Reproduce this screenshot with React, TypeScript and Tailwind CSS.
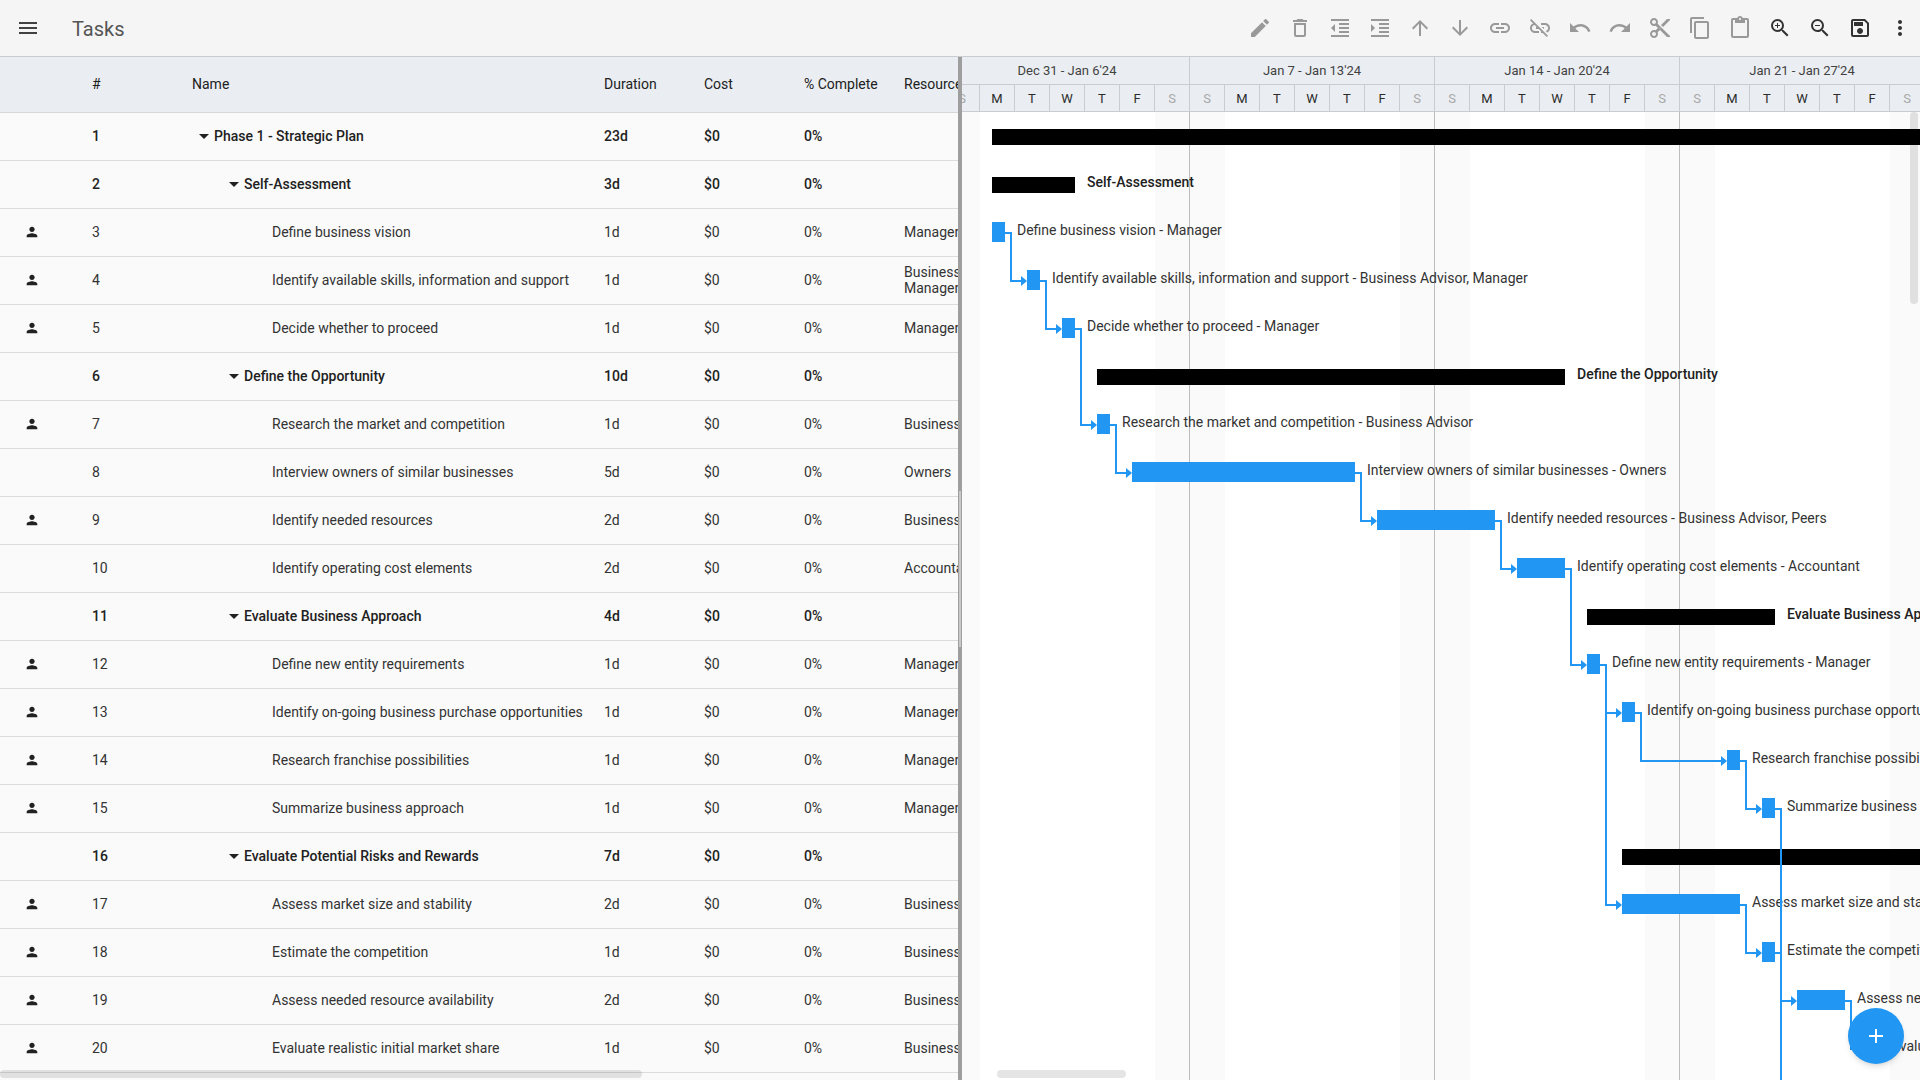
import { Fragment } from 'react';
import type { IconType } from 'react-icons';
import {
  MdAdd,
  MdArrowDownward,
  MdArrowDropDown,
  MdArrowUpward,
  MdContentCopy,
  MdContentCut,
  MdContentPaste,
  MdDeleteOutline,
  MdEdit,
  MdFormatIndentDecrease,
  MdFormatIndentIncrease,
  MdLink,
  MdLinkOff,
  MdMenu,
  MdMoreVert,
  MdOutlineSave,
  MdPerson,
  MdRedo,
  MdUndo,
  MdZoomIn,
  MdZoomOut,
} from 'react-icons/md';

type Task = {
  id: number;
  name: string;
  level: number;
  duration: string;
  resources?: string[];
  person?: boolean;
  start: number;
  end: number;
};

const tasks: Task[] = [
  { id: 1, name: 'Phase 1 - Strategic Plan', level: 0, duration: '23d', start: 30, end: 1135 },
  { id: 2, name: 'Self-Assessment', level: 1, duration: '3d', start: 30, end: 113 },
  { id: 3, name: 'Define business vision', level: 2, duration: '1d', resources: ['Manager'], person: true, start: 30, end: 43 },
  { id: 4, name: 'Identify available skills, information and support', level: 2, duration: '1d', resources: ['Business Advisor', 'Manager'], person: true, start: 65, end: 78 },
  { id: 5, name: 'Decide whether to proceed', level: 2, duration: '1d', resources: ['Manager'], person: true, start: 100, end: 113 },
  { id: 6, name: 'Define the Opportunity', level: 1, duration: '10d', start: 135, end: 603 },
  { id: 7, name: 'Research the market and competition', level: 2, duration: '1d', resources: ['Business Advisor'], person: true, start: 135, end: 148 },
  { id: 8, name: 'Interview owners of similar businesses', level: 2, duration: '5d', resources: ['Owners'], start: 170, end: 393 },
  { id: 9, name: 'Identify needed resources', level: 2, duration: '2d', resources: ['Business Advisor', 'Peers'], person: true, start: 415, end: 533 },
  { id: 10, name: 'Identify operating cost elements', level: 2, duration: '2d', resources: ['Accountant'], start: 555, end: 603 },
  { id: 11, name: 'Evaluate Business Approach', level: 1, duration: '4d', start: 625, end: 813 },
  { id: 12, name: 'Define new entity requirements', level: 2, duration: '1d', resources: ['Manager'], person: true, start: 625, end: 638 },
  { id: 13, name: 'Identify on-going business purchase opportunities', level: 2, duration: '1d', resources: ['Manager'], person: true, start: 660, end: 673 },
  { id: 14, name: 'Research franchise possibilities', level: 2, duration: '1d', resources: ['Manager'], person: true, start: 765, end: 778 },
  { id: 15, name: 'Summarize business approach', level: 2, duration: '1d', resources: ['Manager'], person: true, start: 800, end: 813 },
  { id: 16, name: 'Evaluate Potential Risks and Rewards', level: 1, duration: '7d', start: 660, end: 1050 },
  { id: 17, name: 'Assess market size and stability', level: 2, duration: '2d', resources: ['Business Advisor'], person: true, start: 660, end: 778 },
  { id: 18, name: 'Estimate the competition', level: 2, duration: '1d', resources: ['Business Advisor'], person: true, start: 800, end: 813 },
  { id: 19, name: 'Assess needed resource availability', level: 2, duration: '2d', resources: ['Business Advisor'], person: true, start: 835, end: 883 },
  { id: 20, name: 'Evaluate realistic initial market share', level: 2, duration: '1d', resources: ['Business Advisor'], person: true, start: 905, end: 918 },
];

const links: [number, number][] = [
  [3, 4],
  [4, 5],
  [5, 7],
  [7, 8],
  [8, 9],
  [9, 10],
  [10, 12],
  [12, 13],
  [13, 14],
  [14, 15],
  [12, 17],
  [17, 18],
  [18, 19],
  [19, 20],
];

const ROW = 48;
const weeks = ["Dec 31 - Jan 6'24", "Jan 7 - Jan 13'24", "Jan 14 - Jan 20'24", "Jan 21 - Jan 27'24"];
const days = ['S', 'M', 'T', 'W', 'T', 'F', 'S'];

const tools: { label: string; icon: IconType; active?: boolean }[] = [
  { label: 'Edit', icon: MdEdit },
  { label: 'Delete', icon: MdDeleteOutline },
  { label: 'Outdent', icon: MdFormatIndentDecrease },
  { label: 'Indent', icon: MdFormatIndentIncrease },
  { label: 'Move up', icon: MdArrowUpward },
  { label: 'Move down', icon: MdArrowDownward },
  { label: 'Link', icon: MdLink },
  { label: 'Unlink', icon: MdLinkOff },
  { label: 'Undo', icon: MdUndo },
  { label: 'Redo', icon: MdRedo },
  { label: 'Cut', icon: MdContentCut },
  { label: 'Copy', icon: MdContentCopy },
  { label: 'Paste', icon: MdContentPaste },
  { label: 'Zoom in', icon: MdZoomIn, active: true },
  { label: 'Zoom out', icon: MdZoomOut, active: true },
  { label: 'Save', icon: MdOutlineSave, active: true },
  { label: 'More', icon: MdMoreVert, active: true },
];

function Toolbar() {
  return (
    <header className="flex h-[57px] shrink-0 items-center justify-between border-b border-[#c9cdd1] bg-[#f5f5f5] pl-2">
      <div className="flex items-center gap-6">
        <button aria-label="Menu" className="flex size-10 items-center justify-center text-[#424242]">
          <MdMenu size={24} />
        </button>
        <h1 className="pt-0.5 text-xl text-[#555555]">Tasks</h1>
      </div>
      <div className="flex items-center">
        {tools.map(({ label, icon: Icon, active }) => (
          <button
            key={label}
            aria-label={label}
            className={`flex size-10 items-center justify-center ${active ? 'text-[#333333]' : 'text-[#999999]'}`}
          >
            <Icon size={24} />
          </button>
        ))}
      </div>
    </header>
  );
}

function TaskName({ task }: { task: Task }) {
  const indent = ['pl-0', 'pl-[30px]', 'pl-20'][task.level];
  return (
    <div className={`flex items-center whitespace-nowrap ${indent}`}>
      {task.level < 2 && (
        <button aria-label={`Collapse ${task.name}`} className="flex h-4 w-[22px] items-center justify-center pl-0.5">
          <MdArrowDropDown size={24} className="shrink-0" />
        </button>
      )}
      <span>{task.name}</span>
    </div>
  );
}

function TaskGrid() {
  return (
    <section className="relative min-w-0 flex-1 overflow-hidden bg-[#fafafa]">
      <table className="w-[1560px] table-fixed border-separate border-spacing-0 text-left text-sm leading-4 text-[#212121]">
        <colgroup>
          <col className="w-20" />
          <col className="w-[100px]" />
          <col className="w-[412px]" />
          <col className="w-[100px]" />
          <col className="w-[100px]" />
          <col className="w-[100px]" />
          <col />
        </colgroup>
        <thead>
          <tr className="h-14 bg-[#eaeef2]">
            {['', '#', 'Name', 'Duration', 'Cost', '% Complete', 'Resources'].map((title, i) => (
              <th key={i} className="border-b border-[#d6d9dc] px-3 pt-0 pb-0.5 font-normal whitespace-nowrap">
                {title}
              </th>
            ))}
          </tr>
        </thead>
        <tbody>
          {tasks.map((task) => {
            const tone = task.level < 2 ? 'font-medium' : 'font-normal text-[#333333]';
            return (
              <tr key={task.id} className={`h-12 ${tone} [&>td]:border-b [&>td]:border-[#dcdcdc] [&>td]:px-3 [&>td]:pt-0 [&>td]:pb-0.5`}>
                <td>{task.person && <MdPerson size={16} className="ml-3 text-[#212121]" />}</td>
                <td>{task.id}</td>
                <td>
                  <TaskName task={task} />
                </td>
                <td>{task.duration}</td>
                <td>$0</td>
                <td>0%</td>
                <td>
                  {task.id === 4 ? (
                    <>
                      Business Advisor,
                      <br />
                      Manager
                    </>
                  ) : (
                    task.resources?.join(', ')
                  )}
                </td>
              </tr>
            );
          })}
        </tbody>
      </table>
      <div className="absolute bottom-0.5 left-0 h-2 w-[67%] rounded-full bg-black/10" />
    </section>
  );
}

function Timescale() {
  return (
    <div className="-ml-[17px] flex w-max text-[13px] text-[#424242]">
      {weeks.map((week) => (
        <div key={week} className="w-[245px] bg-[#eaeef2] text-center">
          <div className="h-7 border-r border-b border-[#c9cdd1] leading-[27px]">{week}</div>
          <div className="grid h-[27px] grid-cols-7 border-b border-[#c9cdd1] leading-[27px]">
            {days.map((day, i) => (
              <span key={i} className={`border-r border-[#c9cdd1] ${day === 'S' ? 'text-[#a8a8a8]' : 'text-[#2b2b2b]'}`}>
                {day}
              </span>
            ))}
          </div>
        </div>
      ))}
    </div>
  );
}

function linkPath(from: Task, to: Task) {
  const y1 = (from.id - 1) * ROW + 25;
  const y2 = (to.id - 1) * ROW + 25;
  return `M${from.end} ${y1}H${from.end + 6}V${y2}H${to.start - 4}`;
}

function Links() {
  const summarize = tasks[14];
  return (
    <svg className="absolute inset-0 size-full" fill="none" stroke="#2196f3" strokeWidth={2}>
      {links.map(([a, b]) => {
        const from = tasks[a - 1];
        const to = tasks[b - 1];
        const y = (b - 1) * ROW + 25;
        return (
          <Fragment key={`${a}-${b}`}>
            <path d={linkPath(from, to)} />
            <path d={`M${to.start - 6} ${y - 5}L${to.start} ${y}L${to.start - 6} ${y + 5}Z`} fill="#2196f3" stroke="none" />
          </Fragment>
        );
      })}
      <path d={`M${summarize.end} ${14 * ROW + 25}h6V1100`} />
    </svg>
  );
}

function Chart() {
  return (
    <section className="flex min-w-0 flex-1 flex-col overflow-hidden bg-white">
      <Timescale />
      <div className="relative flex-1 overflow-hidden">
        <div className="-ml-[17px] flex h-full w-max">
          {weeks.map((week) => (
            <div key={week} className="flex w-[245px] justify-between border-r border-[#bdbdbd]">
              <div className="w-[35px] bg-[#fafafa]" />
              <div className="w-[34px] bg-[#fafafa]" />
            </div>
          ))}
        </div>
        {tasks.map((task, i) => {
          const summary = task.level < 2;
          const label = task.resources ? `${task.name} - ${task.resources.join(', ')}` : task.name;
          return (
            <Fragment key={task.id}>
              <div
                className={`absolute ${summary ? 'h-4 bg-black' : 'h-5 bg-[#2196f3]'}`}
                style={{ left: task.start, width: task.end - task.start, top: i * ROW + (summary ? 17 : 14) }}
              />
              <span
                className={`absolute text-sm leading-5 whitespace-nowrap ${summary ? 'font-medium text-[#212121]' : 'text-[#333333]'}`}
                style={{ left: task.end + 12, top: i * ROW + 12 }}
              >
                {label}
              </span>
            </Fragment>
          );
        })}
        <Links />
        <div className="absolute top-0 right-0.5 h-48 w-2 rounded-full bg-black/10" />
        <div className="absolute bottom-0.5 left-[35px] h-2 w-[129px] rounded-full bg-black/10" />
      </div>
    </section>
  );
}

export default function App() {
  return (
    <div className="relative flex h-screen flex-col overflow-hidden bg-white font-[Roboto,sans-serif]">
      <Toolbar />
      <main className="flex min-h-0 flex-1">
        <TaskGrid />
        <div role="separator" className="flex w-1 shrink-0 items-center justify-center bg-[#9e9e9e]">
          <div className="h-[156px] w-0.5 bg-[#c8c8c8]" />
        </div>
        <Chart />
      </main>
      <button
        aria-label="Add task"
        className="absolute right-4 bottom-4 flex size-14 items-center justify-center rounded-full bg-[#2196f3] text-white shadow-md"
      >
        <MdAdd size={24} />
      </button>
    </div>
  );
}
